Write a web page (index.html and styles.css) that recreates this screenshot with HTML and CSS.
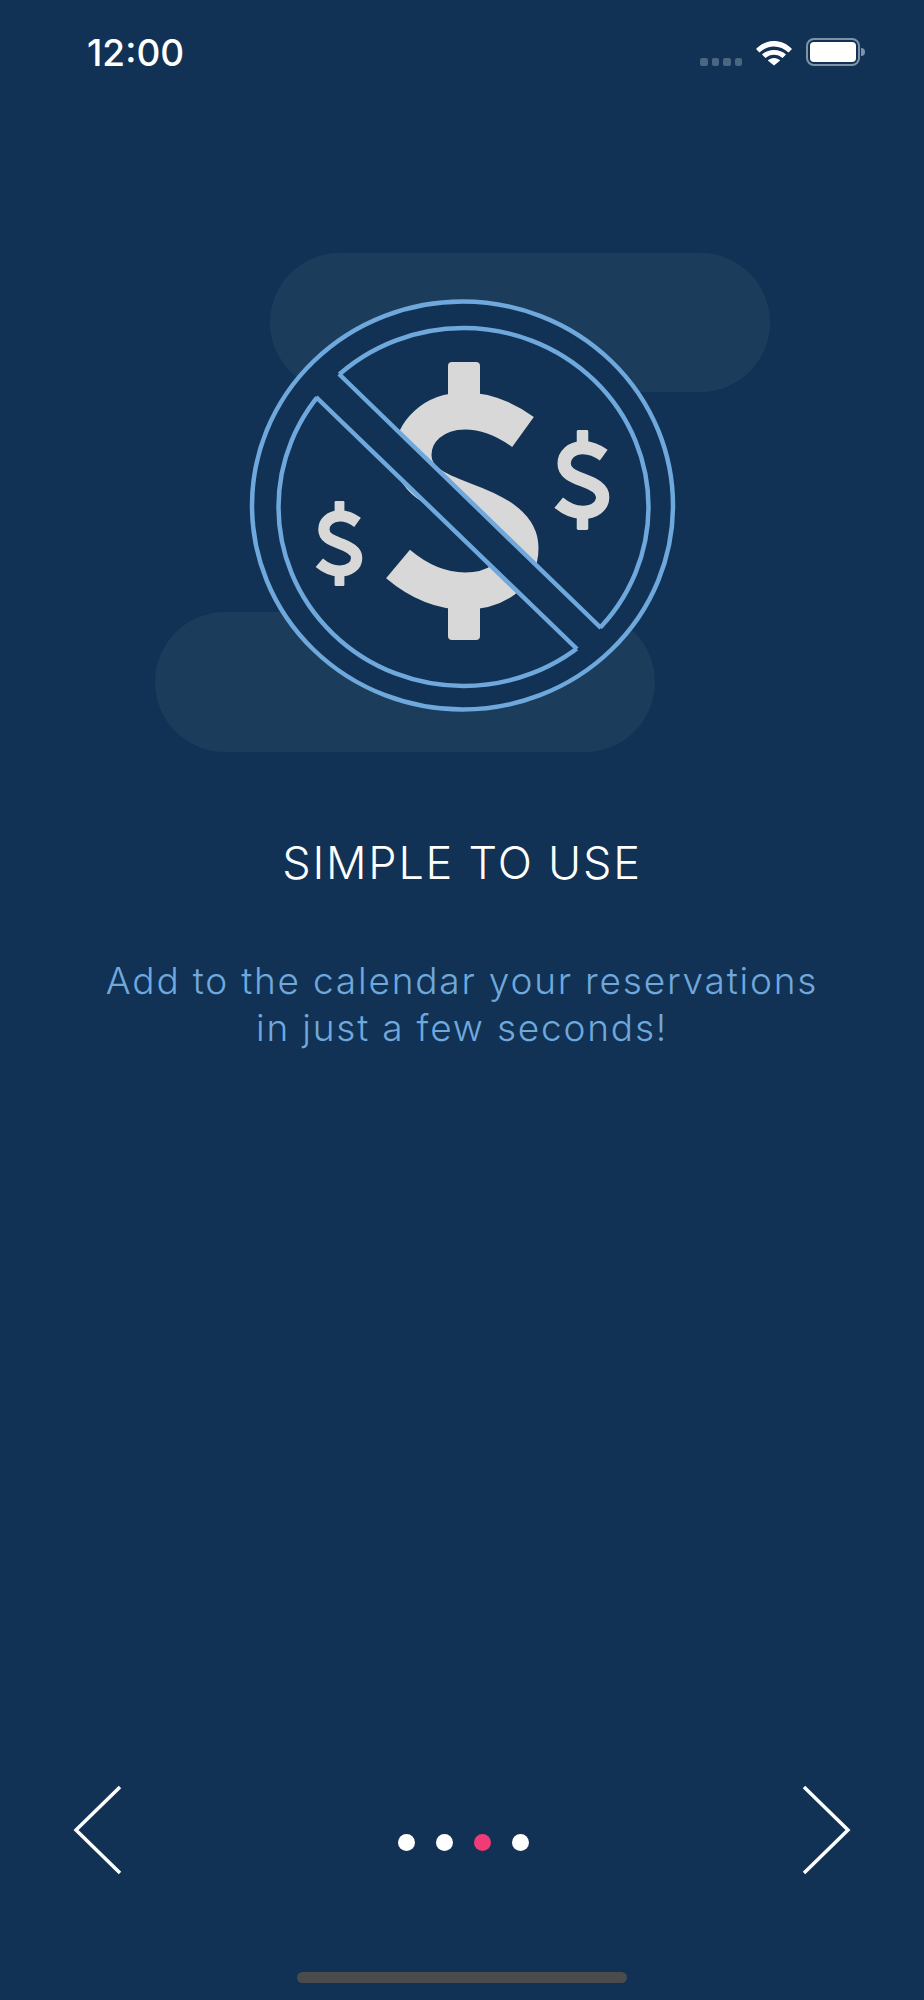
FILE: index.html
```html
<!DOCTYPE html>
<html lang="en">
<head>
  <meta charset="UTF-8">
  <meta name="viewport" content="width=device-width, initial-scale=1.0">
  <title>Simple to use</title>
  <link rel="stylesheet" href="styles.css">
</head>
<body>
  <div class="screen">
    <div class="status-bar">
      <span class="time">12:00</span>
      <div class="status-icons">
        <div class="signal">
          <span></span><span></span><span></span><span></span>
        </div>
        <svg class="wifi" width="36" height="25" viewBox="0 0 36 25">
          <path d="M0 8C10-2.7 26-2.7 36 8L32.5 11.5C24 3.5 12 3.5 3.5 11.5Z"/>
          <path d="M6 13.5C12 7.5 24 7.5 30 13.5L26.5 17C22 12.5 14 12.5 9.5 17Z"/>
          <path d="M11.8 19.5C15 16 21 16 24.2 19.5L18 24.5Z"/>
        </svg>
        <div class="battery"><div class="battery-level"></div></div>
        <div class="battery-cap"></div>
      </div>
    </div>

    <svg class="illustration" width="924" height="520" viewBox="0 240 924 520">
      <defs>
        <g id="dollar">
          <path class="dollar-bar" d="M-16 -135a4 4 0 0 1 4 -4h24a4 4 0 0 1 4 4v40h-32z"/>
          <path class="dollar-bar" d="M-16 95h32v40a4 4 0 0 1 -4 4h-24a4 4 0 0 1 -4 -4z"/>
          <path class="dollar-s" d="M59 -69C41 -82 23 -90 1 -90C-31 -90 -51 -69 -51 -46C-51 -21 -29 -11 1 0C31 11 56 24 56 47C56 74 31 90 1 90C-24 90 -47 79 -66 63"/>
        </g>
      </defs>
      <rect class="blob" x="270" y="253" width="500" height="139" rx="69.5"/>
      <rect class="blob" x="155" y="612" width="500" height="140" rx="70"/>
      <ellipse class="disc" cx="462.5" cy="505.5" rx="210.5" ry="204"/>
      <use href="#dollar" transform="translate(464 501)"/>
      <use href="#dollar" transform="translate(582.5 480) scale(.36)"/>
      <use href="#dollar" transform="translate(339.5 543.5) scale(.306)"/>
      <ellipse class="ring" cx="463.5" cy="507" rx="185" ry="179"/>
      <polygon class="band" points="330,365 610,637 586,658 307,388"/>
      <path class="band-line" d="M316 397L577 649M339 374L601 628"/>
    </svg>

    <h1 class="title">SIMPLE TO USE</h1>
    <p class="subtitle">Add to the calendar your reservations<br>in just a few seconds!</p>

    <div class="pager">
      <svg class="arrow" width="50" height="92" viewBox="0 0 50 92">
        <path d="M47 3L3 46L47 89"/>
      </svg>
      <div class="dots">
        <span class="dot"></span>
        <span class="dot"></span>
        <span class="dot active"></span>
        <span class="dot"></span>
      </div>
      <svg class="arrow" width="50" height="92" viewBox="0 0 50 92">
        <path d="M3 3L47 46L3 89"/>
      </svg>
    </div>

    <div class="home-bar"></div>
  </div>
</body>
</html>
```

FILE: styles.css
```css
* {
  box-sizing: border-box;
}

body {
  margin: 0;
  background-color: #113254;
  font-family: Inter, "Open Sans", sans-serif;
}

.screen {
  display: flex;
  flex-direction: column;
  width: 924px;
  height: 2000px;
  background-color: #113254;
}

.status-bar {
  display: flex;
  justify-content: space-between;
  align-items: flex-start;
  height: 240px;
  padding: 31px 59px 0 87px;
}

.time {
  color: #fff;
  font-size: 37px;
  font-weight: 500;
  line-height: 44px;
}

.status-icons {
  display: flex;
  align-items: flex-end;
  padding-top: 7px;
}

.signal {
  display: flex;
  gap: 4px;
  margin-right: 14px;
}

.signal span {
  width: 7.5px;
  height: 8px;
  border-radius: 2px;
  background-color: #4a6681;
}

.wifi {
  fill: #fff;
  margin-right: 14px;
}

.battery {
  width: 54px;
  height: 28px;
  padding: 2px;
  border: 2px solid #7f93a8;
  border-radius: 8px;
}

.battery-level {
  height: 100%;
  border-radius: 4px;
  background-color: #fff;
}

.battery-cap {
  width: 4px;
  height: 8px;
  margin: 0 0 10px 1px;
  border-radius: 0 4px 4px 0;
  background-color: #7f93a8;
}

.illustration {
  display: block;
  flex: none;
}

.blob {
  fill: #1b3c5a;
}

.disc {
  fill: #113254;
  stroke: #6fa8dc;
  stroke-width: 4.5;
}

.ring {
  fill: none;
  stroke: #6fa8dc;
  stroke-width: 4.5;
}

.band {
  fill: #113254;
}

.band-line {
  fill: none;
  stroke: #6fa8dc;
  stroke-width: 4.5;
}

.dollar-bar {
  fill: #d8d8d8;
}

.dollar-s {
  fill: none;
  stroke: #d8d8d8;
  stroke-width: 37;
}

.title {
  margin: 76px 0 0;
  color: #fff;
  font-size: 45px;
  font-weight: 350;
  line-height: 54px;
  letter-spacing: 1.8px;
  text-align: center;
}

.subtitle {
  margin: 67px 0 0;
  color: #6fa8dc;
  font-size: 37px;
  font-weight: 350;
  line-height: 47px;
  letter-spacing: 1.8px;
  text-align: center;
}

.pager {
  display: flex;
  justify-content: space-between;
  align-items: flex-start;
  margin-top: auto;
  padding: 0 73px;
}

.dots {
  display: flex;
  gap: 21px;
  margin: 50px 0 0 2px;
}

.dot {
  width: 17px;
  height: 17px;
  border-radius: 50%;
  background-color: #fff;
}

.dot.active {
  background-color: #f13a76;
}

.arrow {
  fill: none;
  stroke: #fff;
  stroke-width: 3.5;
}

.home-bar {
  width: 330px;
  height: 11px;
  margin: 96px auto 17px;
  border-radius: 6px;
  background-color: #4b4b4b;
}
```
